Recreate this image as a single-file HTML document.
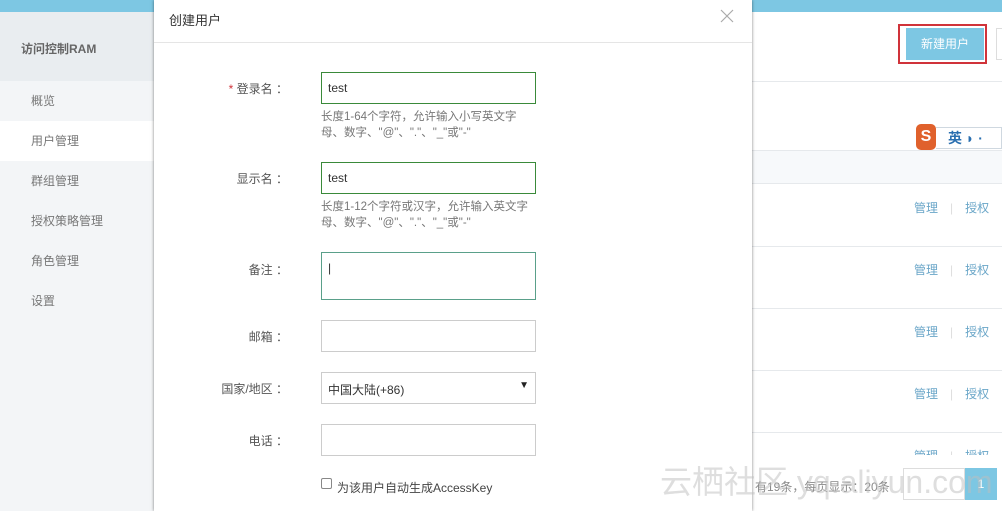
<!DOCTYPE html>
<html><head><meta charset="utf-8"><style>
*{margin:0;padding:0;box-sizing:border-box}
html,body{width:1002px;height:511px;overflow:hidden}
body{position:relative;background:#fff;font-family:"Liberation Sans","Noto Sans CJK SC",sans-serif;font-size:12px;color:#333}
.top{position:absolute;left:0;top:0;width:1002px;height:12px;background:#7dc7e3}
.side{position:absolute;left:0;top:12px;width:154px;height:499px;background:#f3f5f7}
.side .hd{height:69px;background:#e9edf0;color:#666;font-weight:bold;font-size:12px;padding:28px 0 0 21px}
.side .it{height:40px;line-height:40px;padding-left:31px;color:#777;font-size:12px}
.side .on{background:#fff}
.abs{position:absolute}
.line{position:absolute;left:752px;width:250px;height:1px;background:#e6e9ec}
.ops{position:absolute;left:914px;color:#6aa6c8;font-size:12px;white-space:nowrap}
.ops span{color:#ddd;margin:0 12px}
.modal{position:absolute;left:154px;top:0;width:598px;height:511px;background:#fff;box-shadow:0 0 3px rgba(0,0,0,.5)}
.mh{height:43px;border-bottom:1px solid #e5e5e5;padding:10px 0 0 15px;font-size:13px;color:#333}
.lab{position:absolute;width:134px;text-align:right;font-size:12px;color:#555;white-space:nowrap}
.inp{position:absolute;left:167px;width:215px;height:32px;border:1px solid #ccc;background:#fff;padding:8px 0 0 6px;font-size:12px}
.g{border:1px solid #3a8a3a}
.hint{position:absolute;left:167px;width:208px;font-size:11.5px;color:#777;line-height:16px}
</style></head><body>
<div class="top"></div>
<div class="side">
<div class="hd">访问控制RAM</div>
<div class="it">概览</div>
<div class="it on">用户管理</div>
<div class="it">群组管理</div>
<div class="it">授权策略管理</div>
<div class="it">角色管理</div>
<div class="it">设置</div>
</div>
<div class="abs" style="left:898px;top:24px;width:89px;height:40px;border:2px solid #d0333a"></div>
<div class="abs" style="left:906px;top:28px;width:78px;height:32px;background:#7dc7e3;color:#fff;text-align:center;line-height:32px;font-size:12px">新建用户</div>
<div class="abs" style="left:996px;top:28px;width:6px;height:32px;border:1px solid #ddd;border-right:none"></div>
<div class="line" style="top:81px"></div>
<div class="abs" style="left:916px;top:124px;width:20px;height:26px;background:#e0612c;border-radius:5px;color:#fff;font-weight:bold;text-align:center;line-height:26px;font-size:16px">S</div>
<div class="abs" style="left:936px;top:127px;width:66px;height:22px;border:1px solid #cfd8e0;border-left:none;background:#fff;color:#2a6fb0;font-weight:bold;font-size:14px;padding-left:12px;line-height:20px;white-space:nowrap">英 ◗ ·</div>
<div class="abs" style="left:752px;top:150px;width:250px;height:34px;background:#f7f9fb;border-top:1px solid #e6e9ec;border-bottom:1px solid #e6e9ec"></div>
<div class="line" style="top:246px"></div>
<div class="line" style="top:308px"></div>
<div class="line" style="top:370px"></div>
<div class="line" style="top:432px"></div>
<div class="ops" style="top:199px">管理<span>|</span>授权</div>
<div class="ops" style="top:261px">管理<span>|</span>授权</div>
<div class="ops" style="top:323px">管理<span>|</span>授权</div>
<div class="ops" style="top:385px">管理<span>|</span>授权</div>
<div class="ops" style="top:447px">管理<span>|</span>授权</div>
<div class="abs" style="left:752px;top:455px;width:250px;height:56px;background:#fff"></div>
<div class="abs" style="left:755px;top:478px;color:#888;font-size:12px;white-space:nowrap">有19条，每页显示：20条</div>
<div class="abs" style="left:903px;top:468px;width:62px;height:32px;border:1px solid #ddd"></div>
<div class="abs" style="left:965px;top:468px;width:32px;height:32px;background:#7dc7e3;color:#fff;text-align:center;line-height:32px">1</div>
<div class="modal">
<div class="mh">创建用户</div>
<svg class="abs" style="left:566px;top:9px" width="14" height="14" viewBox="0 0 14 14"><path d="M1 1L13 13M13 1L1 13" stroke="#aaa" stroke-width="1.2"/></svg>
<div class="lab" style="top:80px"><span style="color:#d0333a">*</span> 登录名 ：</div>
<div class="inp g" style="top:72px">test</div>
<div class="hint" style="top:109px">长度1-64个字符，允许输入小写英文字母、数字、"@"、"."、"_"或"-"</div>
<div class="lab" style="top:170px">显示名 ：</div>
<div class="inp g" style="top:162px">test</div>
<div class="hint" style="top:199px">长度1-12个字符或汉字，允许输入英文字母、数字、"@"、"."、"_"或"-"</div>
<div class="lab" style="top:261px">备注 ：</div>
<div class="inp" style="top:252px;height:48px;border-color:#5aa08a">|</div>
<div class="lab" style="top:328px">邮箱 ：</div>
<div class="inp" style="top:320px"></div>
<div class="lab" style="top:380px">国家/地区 ：</div>
<div class="inp" style="top:372px">中国大陆(+86)<span style="position:absolute;right:6px;top:7px;font-size:10px;color:#222">▼</span></div>
<div class="lab" style="top:432px">电话 ：</div>
<div class="inp" style="top:424px"></div>
<div class="abs" style="left:167px;top:478px;width:11px;height:11px;border:1px solid #888;border-radius:2px"></div>
<div class="abs" style="left:183px;top:479px;font-size:12px;color:#444;white-space:nowrap">为该用户自动生成AccessKey</div>
</div>
<div class="abs" style="left:660px;top:462px;font-size:32px;line-height:40px;color:rgba(190,190,190,.5);white-space:nowrap">云栖社区 yq.aliyun.com</div>
</body></html>
